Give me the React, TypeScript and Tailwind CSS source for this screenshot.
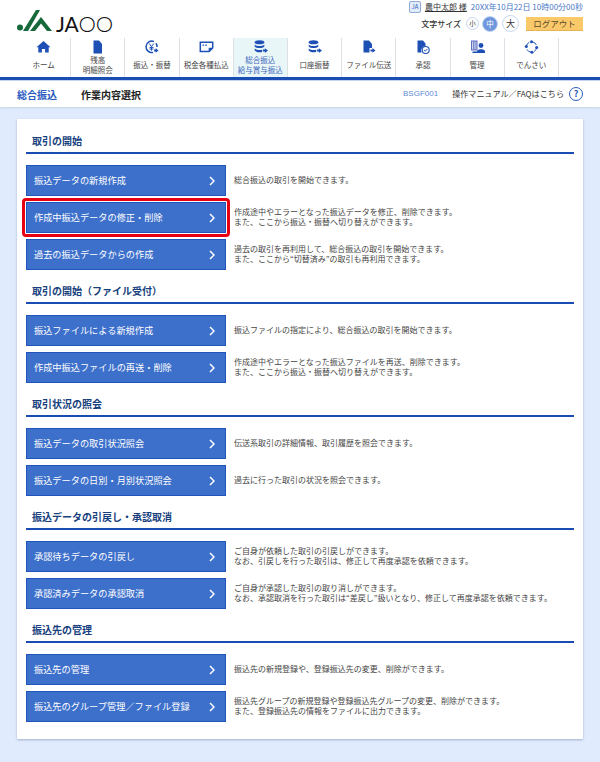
import React from 'react';

const FONT = '"Noto Sans CJK JP", "Noto Sans", sans-serif';
const BLUE = '#1d4fb5';

const Disks = () => (
  <>
    <ellipse cx="6" cy="2.2" rx="4.8" ry="2" />
    <path d="M1.2 4.6 C3 6.6 9 6.6 10.8 4.6 V6.4 C9 8.4 3 8.4 1.2 6.4 Z" />
    <path d="M1.2 8.4 C3 10.2 6.5 10.4 8.6 9.8 V12 C6 12.6 2.8 12.2 1.2 10.4 Z" />
    <path d="M9.4 9.6 H11.4 V8.2 L14.5 10.6 L11.4 13 V11.6 H9.4 Z" />
  </>
);

const NAV: { label: string[]; icon: React.ReactNode; active?: boolean }[] = [
  {
    label: ['ホーム'],
    icon: <path d="M7 1 L14 7.2 L12.2 7.2 L12.2 12.5 L8.6 12.5 L8.6 9 L5.4 9 L5.4 12.5 L1.8 12.5 L1.8 7.2 L0 7.2 Z" />,
  },
  {
    label: ['残高', '明細照会'],
    icon: (
      <path d="M3 0.5 H8.5 L11.5 4 V13.5 H3 Z" />
    ),
  },
  {
    label: ['振込・振替'],
    icon: (
      <>
        <path d="M9.5 1.6 A5.7 5.7 0 1 0 8.6 12.4" fill="none" stroke={BLUE} strokeWidth="1.5" />
        <path d="M11.4 3.2 A5.7 5.7 0 0 1 12.6 7" fill="none" stroke={BLUE} strokeWidth="1.5" />
        <path d="M4.8 3.6 L7 6.6 L9.2 3.6 M7 6.6 V10.6 M5 7.4 H9 M5 9 H9" fill="none" stroke={BLUE} strokeWidth="1" />
        <path d="M9.6 9.4 H11.2 V8 L14 10.4 L11.2 12.8 V11.4 H9.6 Z" />
      </>
    ),
  },
  {
    label: ['税金各種払込'],
    icon: (
      <>
        <path d="M0.8 2.2 H13.2 V8 L9.6 11.4 H0.8 Z" fill="none" stroke={BLUE} strokeWidth="1.5" />
        <path d="M9.2 11.4 V7.8 H13.2 Z" />
        <path d="M3 4.6 H4.6 V5.8 H3 Z M5.8 4.6 H7.4 V5.8 H5.8 Z" />
      </>
    ),
  },
  { label: ['総合振込', '給与賞与振込'], active: true, icon: <Disks /> },
  { label: ['口座振替'], icon: <Disks /> },
  {
    label: ['ファイル伝送'],
    icon: (
      <>
        <path d="M2 0.5 H7.5 L10.5 4 V8 H8 V12.5 H2 Z" />
        <path d="M9 9.6 H11 V8 L14 10.4 L11 12.8 V11.4 H9 Z" />
      </>
    ),
  },
  {
    label: ['承認'],
    icon: (
      <>
        <path d="M2 0.5 H7.5 L10 3.5 V6 A4.6 4.6 0 0 0 6 12.5 H2 Z" />
        <circle cx="10.2" cy="10" r="3.5" fill="none" stroke={BLUE} strokeWidth="1.1" />
        <path d="M8.6 10 L9.8 11.2 L11.9 8.9" fill="none" stroke={BLUE} strokeWidth="1" />
      </>
    ),
  },
  {
    label: ['管理'],
    icon: (
      <>
        <path d="M0.5 0.5 H7 V10.5 H0.5 Z" fill="#5f6fc4" />
        <path d="M2 1.5 V9.5 M3.7 1.5 V9.5 M5.4 1.5 V9.5" stroke="#fff" strokeWidth="0.7" />
        <circle cx="10.5" cy="5.5" r="2.4" />
        <path d="M6.5 11 C7.5 8.5 13.5 8.5 14.5 11 V13 H2 V11.6 H6.5 Z" />
      </>
    ),
  },
  {
    label: ['でんさい'],
    icon: (
      <>
        <circle cx="7" cy="7" r="5.2" fill="none" stroke={BLUE} strokeWidth="1" strokeDasharray="5.2 3"  />
        <circle cx="7" cy="1.8" r="1.5" />
        <circle cx="12.2" cy="7.5" r="1.5" />
        <circle cx="7.5" cy="12.2" r="1.5" />
        <circle cx="1.8" cy="6.5" r="1.5" />
      </>
    ),
  },
];

const SECTIONS: { title: string; rows: { button: string; text: string[]; selected?: boolean }[] }[] = [
  {
    title: '取引の開始',
    rows: [
      { button: '振込データの新規作成', text: ['総合振込の取引を開始できます。'] },
      {
        button: '作成中振込データの修正・削除',
        selected: true,
        text: ['作成途中やエラーとなった振込データを修正、削除できます。', 'また、ここから振込・振替へ切り替えができます。'],
      },
      {
        button: '過去の振込データからの作成',
        text: ['過去の取引を再利用して、総合振込の取引を開始できます。', 'また、ここから“切替済み”の取引も再利用できます。'],
      },
    ],
  },
  {
    title: '取引の開始（ファイル受付）',
    rows: [
      { button: '振込ファイルによる新規作成', text: ['振込ファイルの指定により、総合振込の取引を開始できます。'] },
      {
        button: '作成中振込ファイルの再送・削除',
        text: ['作成途中やエラーとなった振込ファイルを再送、削除できます。', 'また、ここから振込・振替へ切り替えができます。'],
      },
    ],
  },
  {
    title: '取引状況の照会',
    rows: [
      { button: '振込データの取引状況照会', text: ['伝送系取引の詳細情報、取引履歴を照会できます。'] },
      { button: '振込データの日別・月別状況照会', text: ['過去に行った取引の状況を照会できます。'] },
    ],
  },
  {
    title: '振込データの引戻し・承認取消',
    rows: [
      {
        button: '承認待ちデータの引戻し',
        text: ['ご自身が依頼した取引の引戻しができます。', 'なお、引戻しを行った取引は、修正して再度承認を依頼できます。'],
      },
      {
        button: '承認済みデータの承認取消',
        text: ['ご自身が承認した取引の取り消しができます。', 'なお、承認取消を行った取引は“差戻し”扱いとなり、修正して再度承認を依頼できます。'],
      },
    ],
  },
  {
    title: '振込先の管理',
    rows: [
      { button: '振込先の管理', text: ['振込先の新規登録や、登録振込先の変更、削除ができます。'] },
      {
        button: '振込先のグループ管理／ファイル登録',
        text: ['振込先グループの新規登録や登録振込先グループの変更、削除ができます。', 'また、登録振込先の情報をファイルに出力できます。'],
      },
    ],
  },
];

const Chevron = () => (
  <svg width="6" height="10" viewBox="0 0 6 10" fill="none">
    <path d="M1 1 L5 5 L1 9" stroke="#fff" strokeWidth="1.5" />
  </svg>
);

const App = () => {
  return (
    <div className="w-[600px] h-[762px] overflow-hidden bg-[#e0ecfd] text-[#333]" style={{ fontFamily: FONT }}>
      {/* Header */}
      <header className="bg-white h-[80px] border-b-[3px] border-[#1a4db3]">
        <div className="flex justify-between h-[38px]">
          <div className="flex items-start pl-[17px] pt-[10px] gap-[3px]">
            <svg width="36" height="22" viewBox="0 0 36 22">
              <circle cx="3" cy="17.5" r="3" fill="#16693a" />
              <path d="M6 21 L19 0 H23 L11 21 Z" fill="#16693a" />
              <path d="M13 21 L24 7 L35 21 H30 L24 13.5 L18 21 Z" fill="#16693a" />
            </svg>
            <span className="mt-[3px] text-[21px] leading-[22px] text-[#111] tracking-[-0.2px]" style={{ fontFamily: 'Lato, sans-serif' }}>
              JA<span className="font-light text-[22px]">OO</span>
            </span>
          </div>
          <div className="flex flex-col items-end pr-[17px] pt-[1px] gap-[1px]">
            <div className="flex items-center h-[12px] text-[8px] leading-none">
              <span className="w-[12px] h-[12px] mr-[4px] rounded-[2px] border border-[#8fa9d8] bg-[#e3ecfa] flex items-center justify-center text-[#2b5db8] text-[6px]">JA</span>
              <span className="underline mr-[4px] text-[#333]">農中太郎 様</span>
              <span className="text-[#4a78c9]">20XX年10月22日 10時00分00秒</span>
            </div>
            <div className="flex items-center h-[19px]">
              <span className="text-[8px] font-medium mr-[5px]">文字サイズ</span>
              <span className="w-[13px] h-[13px] rounded-full border border-[#c5d6f2] flex items-center justify-center text-[6.5px] mr-[3px]">小</span>
              <span className="w-[16px] h-[16px] rounded-full bg-[#6f96dc] border border-[#c5d6f2] text-white flex items-center justify-center text-[7.5px] mr-[4px]">中</span>
              <span className="w-[17px] h-[17px] rounded-full border border-[#c5d6f2] flex items-center justify-center text-[9px] mr-[7px]">大</span>
              <span className="w-[57px] h-[14px] bg-[#fbc96a] border-b border-[#e6b355] flex items-center justify-center text-[8.5px] text-[#5a4a2a]">ログアウト</span>
            </div>
          </div>
        </div>
        <nav className="flex pl-[17px] h-[39px]">
          {NAV.map((item) => (
            <div
              key={item.label[0]}
              className={`w-[54.2px] h-[39px] border-r border-[#dde1e6] flex flex-col items-center ${item.active ? 'bg-[#e9f6f8]' : ''}`}
            >
              <svg className="mt-[2px] shrink-0" width="15" height="14" viewBox="-0.5 0 15 14" fill={BLUE}>
                {item.icon}
              </svg>
              <div className={`flex-1 flex flex-col justify-center text-[7.5px] leading-[10px] text-center whitespace-nowrap pb-[1px] ${item.active ? 'text-[#3a66bd]' : 'text-[#444]'}`}>
                {item.label.map((l) => (
                  <span key={l}>{l}</span>
                ))}
              </div>
            </div>
          ))}
        </nav>
      </header>

      {/* Title bar */}
      <div className="bg-white h-[27px] flex items-center px-[17px] border-t border-[#c4d5f3] shadow-[0_1px_2px_rgba(120,140,170,0.25)]">
        <span className="text-[10px] font-bold text-[#2a5bbd] w-[64px]">総合振込</span>
        <span className="text-[10px] font-bold text-[#222]">作業内容選択</span>
        <span className="ml-auto text-[8px] text-[#5f8ad6] mr-[14px]" style={{ fontFamily: '"Liberation Sans", sans-serif' }}>BSGF001</span>
        <span className="text-[8.1px] text-[#333] mr-[5px] whitespace-nowrap">操作マニュアル／FAQはこちら</span>
        <span className="w-[14px] h-[14px] rounded-full border-[1.5px] border-[#2a5bbd] flex items-center justify-center text-[9px] font-bold text-[#2a5bbd]">?</span>
      </div>

      {/* Main panel */}
      <main className="mx-[17px] mt-[12px] bg-white px-[9px] pt-[10px] h-[620px] shadow-[0_1px_2px_rgba(100,120,160,0.5)]">
        {SECTIONS.map((section) => (
          <section key={section.title} className="mb-[9px]">
            <h2 className="h-[25px] border-b-2 border-[#1a4db3] pl-[6px] text-[10px] leading-[23px] font-bold text-[#173f7d]">
              {section.title}
            </h2>
            <div className="mt-[11px] flex flex-col gap-[6px]">
              {section.rows.map((row) => (
                <div key={row.button} className="flex items-center h-[31px]">
                  <div className="relative w-[200px] h-[31px] shrink-0">
                    <div className="h-full bg-[#3d70cb] border border-[#1f55bd] flex items-center justify-between pl-[7px] pr-[10px] text-white text-[9.2px] whitespace-nowrap">
                      <span>{row.button}</span>
                      <Chevron />
                    </div>
                    {row.selected && (
                      <div className="absolute -inset-x-[4px] -inset-y-[4px] border-[3px] border-[#e60012] rounded-[4px]" />
                    )}
                  </div>
                  <div className="ml-[8px] -mt-[1px] text-[8px] leading-[10.5px] text-[#444] whitespace-nowrap">
                    {row.text.map((t) => (
                      <p key={t}>{t}</p>
                    ))}
                  </div>
                </div>
              ))}
            </div>
          </section>
        ))}
      </main>
    </div>
  );
};

export default App;
